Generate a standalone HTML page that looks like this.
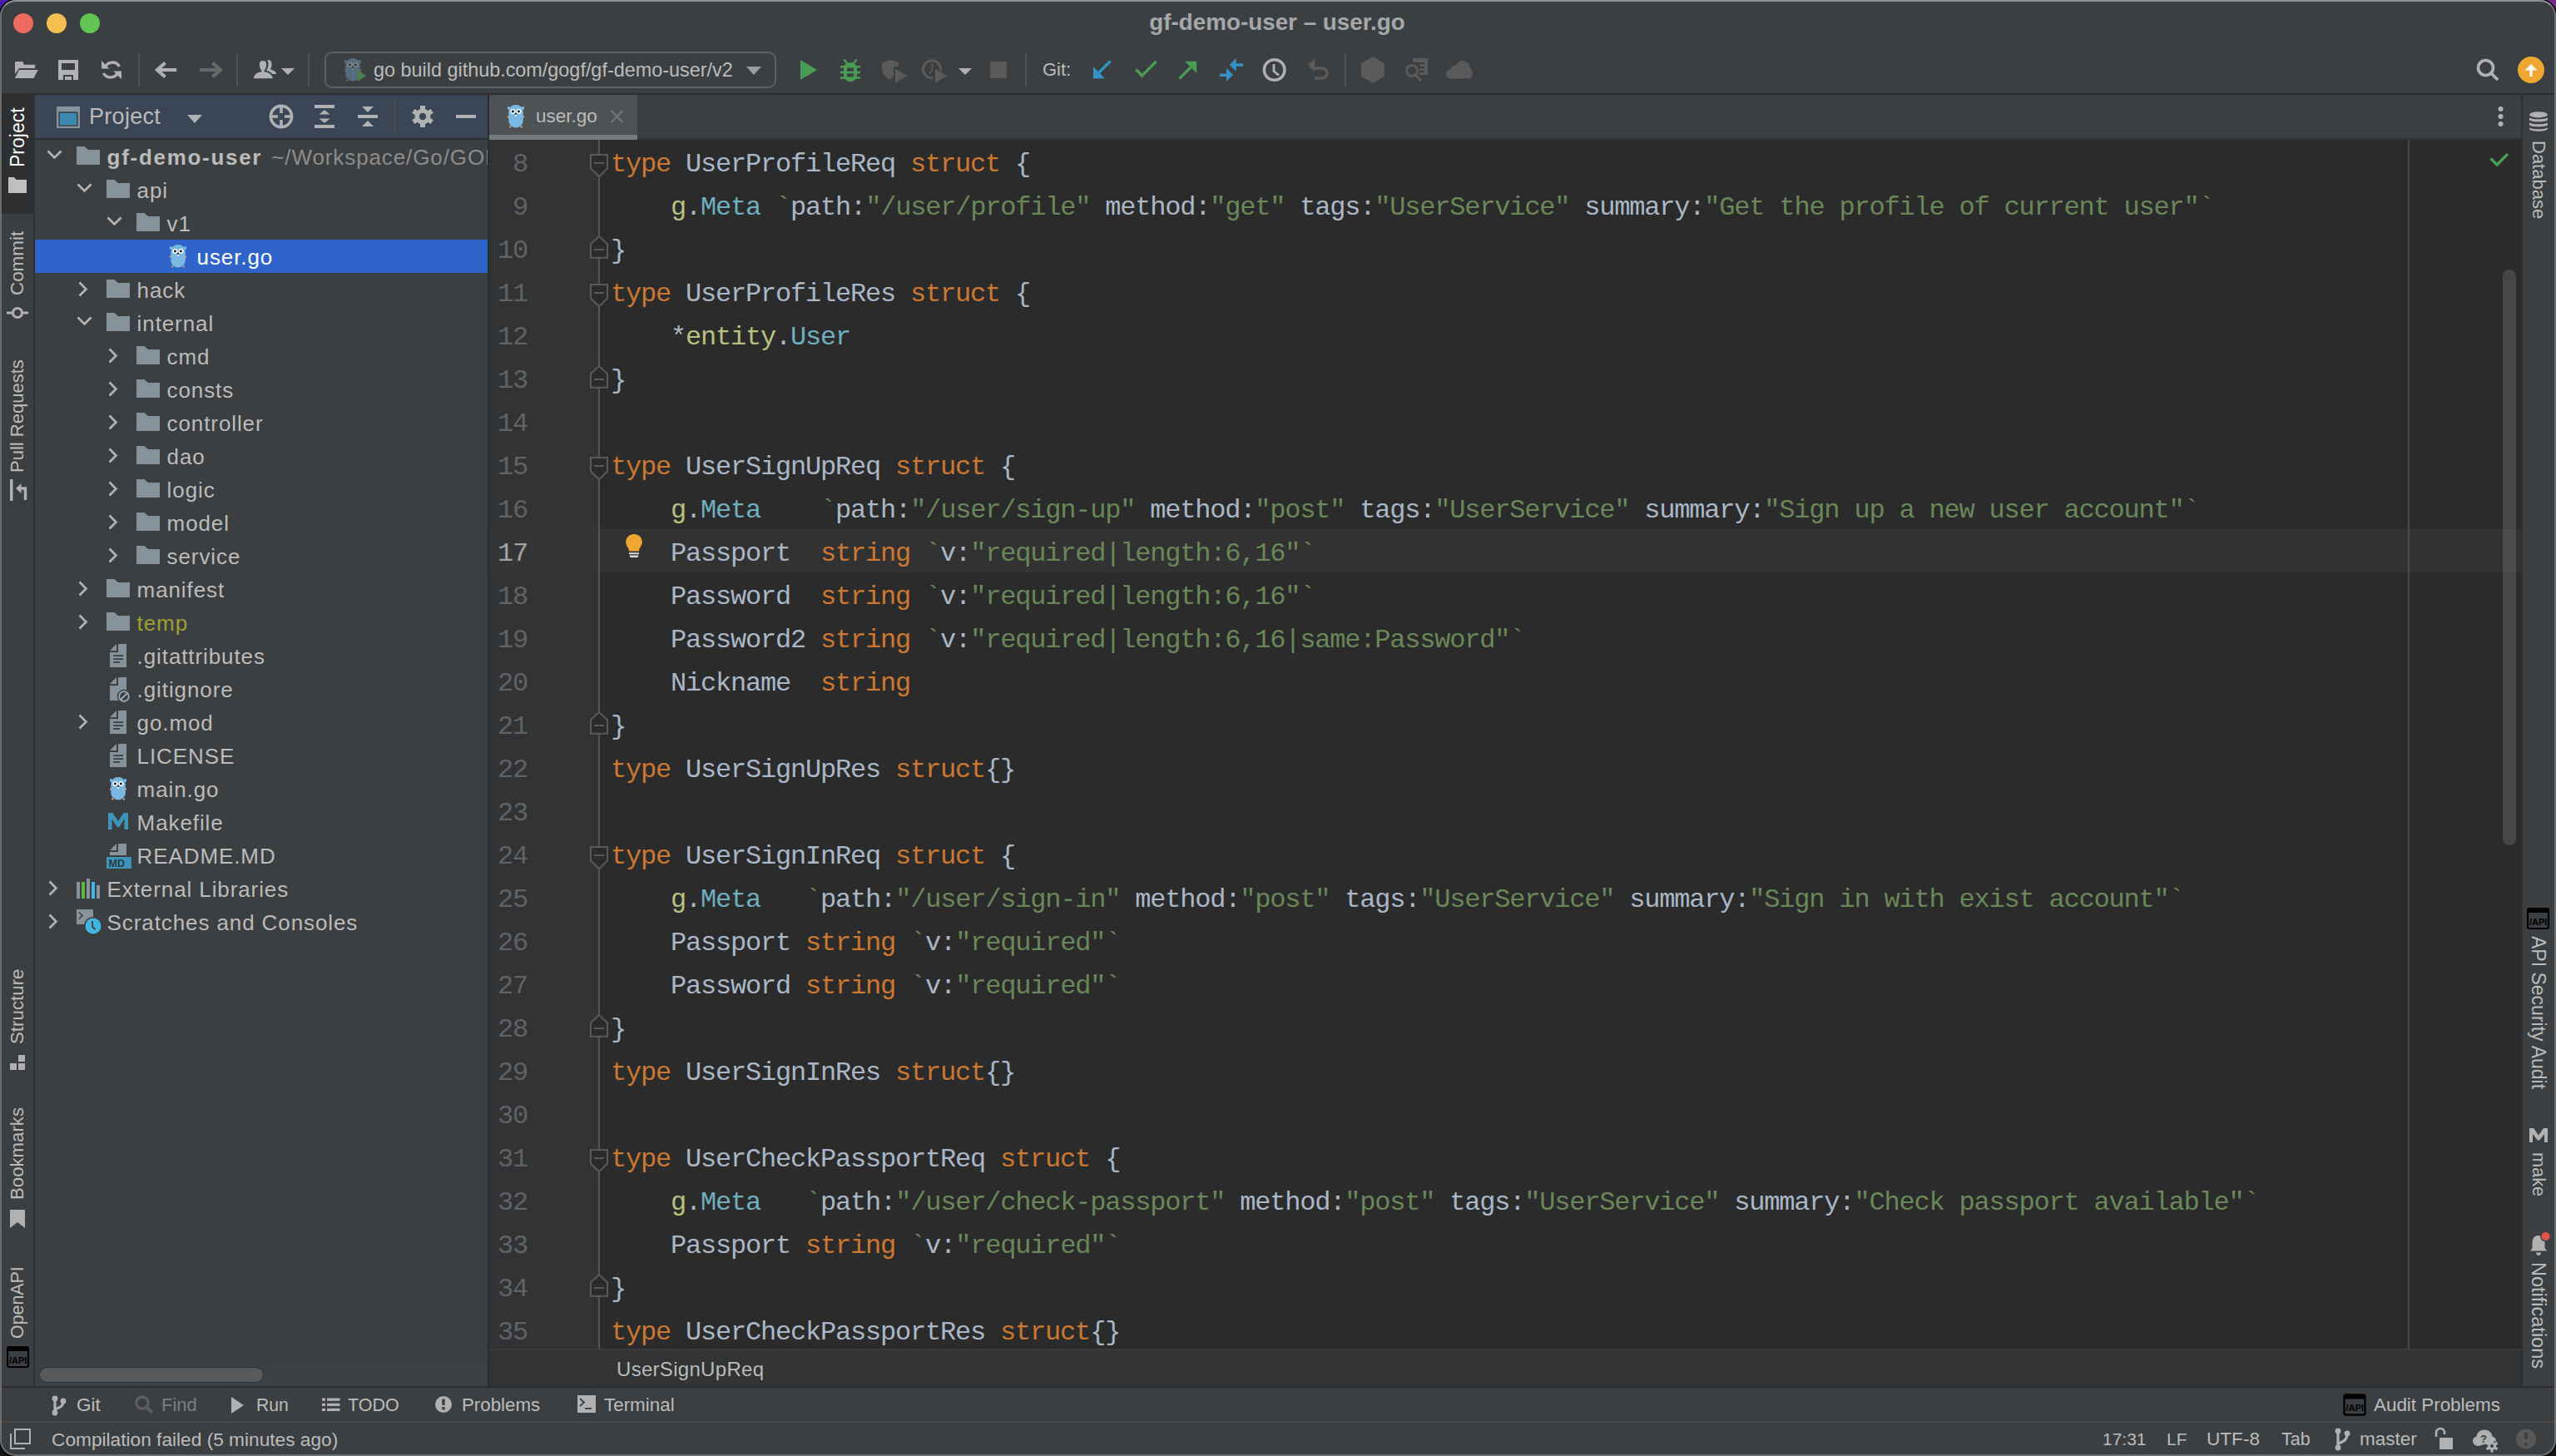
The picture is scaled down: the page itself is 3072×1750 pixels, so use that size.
<!DOCTYPE html>
<html><head><meta charset="utf-8">
<style>
html,body{margin:0;padding:0;width:3072px;height:1750px;overflow:hidden;background:#222;}
*{box-sizing:border-box}
.a{position:absolute}
#bgc{position:absolute;left:0;top:0;width:3072px;height:1750px;background:linear-gradient(90deg,#4a1ca8 0%,#5a2090 50%,#7a2a8a 100%);}
#bgb{position:absolute;left:0;top:875px;width:3072px;height:875px;background:#151515;}
#win{position:absolute;left:0;top:0;width:3072px;height:1750px;border-radius:19px;background:#3c3f41;overflow:hidden;font-family:"Liberation Sans",sans-serif;color:#bbbbbb;}
#wborder{position:absolute;left:0;top:0;width:3072px;height:1750px;border-radius:19px;border:2px solid #6b6d6f;border-top-color:#8e8f91;box-shadow:0 0 0 1.5px #000;pointer-events:none;z-index:50}
.ui{font-family:"Liberation Sans",sans-serif;white-space:pre;}
.code{font-family:"Liberation Mono",monospace;font-size:32px;letter-spacing:-1.2px;white-space:pre;color:#a9b7c6;}
.ln{position:absolute;left:588px;width:46px;padding-top:4px;text-align:right;font-family:"Liberation Mono",monospace;font-size:32px;letter-spacing:-1.2px;color:#606366;}
.cl{position:absolute;left:734px;height:52px;line-height:52px;padding-top:4px;}
.k{color:#cc7832}.s{color:#6a8759}.p{color:#b9c17e}.t{color:#6fb0c0}
.tr{position:absolute;left:42px;width:544px;height:40px;line-height:40px;font-size:26px;letter-spacing:0.9px;color:#bbbbbb;}
.tr span{position:absolute;top:0}
</style></head>
<body>
<svg width="0" height="0" style="position:absolute">
<defs>
<g id="fold"><path d="M0 0H9.5L13.8 4H28V22H0Z" fill="#87939a"/></g>
<g id="gopher">
 <circle cx="1.6" cy="4" r="1.9" fill="#79b8e3"/><circle cx="18.5" cy="4" r="1.9" fill="#79b8e3"/>
 <rect x="1.3" y="0" width="17.5" height="27.6" rx="8.5" fill="#79b8e3"/>
 <circle cx="0.9" cy="14.5" r="1.2" fill="#d39b78"/><circle cx="19.1" cy="14.5" r="1.2" fill="#d39b78"/>
 <circle cx="3.2" cy="26.5" r="1.2" fill="#d39b78"/><circle cx="16.9" cy="26.5" r="1.2" fill="#d39b78"/>
 <circle cx="6.4" cy="8" r="3" fill="#fff"/><circle cx="13.5" cy="8" r="3" fill="#fff"/>
 <circle cx="6.4" cy="8" r="1.4" fill="#000"/><circle cx="13.4" cy="8" r="1.4" fill="#000"/>
 <ellipse cx="10" cy="11" rx="1.4" ry="1.1" fill="#222"/><rect x="9.1" y="11.8" width="1.8" height="2" fill="#fff"/>
</g>
<g id="file"><path d="M10 0H20V28H0V10H10Z M0 8L8 0V8Z" fill="#87939a"/><path d="M4.3 13.2h11.8v1.7H4.3zM4.3 17.2h11.8v1.7H4.3zM4.3 21.1h7.8v1.7H4.3z" fill="#3c3f41"/></g>
<g id="ignore"><path d="M10 0H20V28H0V10H10Z M0 8L8 0V8Z" fill="#87939a"/><circle cx="17" cy="23" r="8.3" fill="#3c3f41"/><circle cx="17" cy="23" r="5.8" fill="none" stroke="#9aabb8" stroke-width="1.8"/><path d="M13 27L21 19" stroke="#9aabb8" stroke-width="1.8"/></g>
<g id="make"><path d="M0 0H5.5L12 10L18.5 0H24V20H19.5V7.5L13.2 17H10.8L4.5 7.5V20H0Z" fill="#3e94b8"/></g>
<g id="md"><path d="M14 0H24V14H4V10H14Z M4 8L12 0V8Z" fill="#87939a"/><rect x="0" y="16" width="30" height="14" fill="#3e94b8"/><text x="2.5" y="28" font-family="Liberation Sans" font-size="12.5" font-weight="bold" fill="#273a45">MD</text></g>
<g id="lib"><rect x="0" y="4" width="4" height="20" fill="#87939a"/><rect x="6" y="4" width="4" height="20" fill="#62b543"/><rect x="12" y="0" width="4" height="24" fill="#87939a"/><rect x="18" y="4" width="4" height="20" fill="#40b6e0"/><rect x="24" y="8" width="4" height="16" fill="#87939a"/></g>
<g id="scratch"><rect x="0" y="0" width="20" height="18" fill="#87939a"/><path d="M3 3.5L7 7.5L3 11.5" fill="none" stroke="#3c3f41" stroke-width="1.6"/><circle cx="20" cy="20" r="11" fill="#3c3f41"/><circle cx="20" cy="20" r="9.5" fill="#40b6e0"/><path d="M19 14V21L22.5 24" fill="none" stroke="#3c3f41" stroke-width="1.8"/></g>
</defs></svg>

<div id="bgc"></div><div id="bgb"></div>
<div id="win">
  <!-- title -->
  <div class="a ui" style="left:0;top:0;width:3070px;height:54px;line-height:54px;text-align:center;font-size:27.8px;font-weight:bold;color:#a5a7a9;">gf-demo-user – user.go</div>
  <div class="a" style="left:16px;top:16px;width:24px;height:24px;border-radius:12px;background:#ec6a5e"></div>
  <div class="a" style="left:56px;top:16px;width:24px;height:24px;border-radius:12px;background:#f4bf4f"></div>
  <div class="a" style="left:96px;top:16px;width:24px;height:24px;border-radius:12px;background:#61c554"></div>

  <!-- toolbar bottom line -->
  <div class="a" style="left:0;top:112px;width:3072px;height:2px;background:#2e2e2e"></div>

  <!-- left stripe -->
  <div class="a" style="left:0;top:114px;width:40px;height:1552px;background:#3c3f41"></div>
  <div class="a" style="left:0;top:114px;width:40px;height:143px;background:#2d2f31"></div>
  <div class="a" style="left:40px;top:114px;width:2px;height:1552px;background:#2f3032"></div>

  <!-- project panel -->
  <div class="a" style="left:42px;top:114px;width:544px;height:52px;background:#3a4555"></div>
  <div class="a" style="left:42px;top:166px;width:544px;height:2px;background:#2e2f31"></div>
  <div class="a" style="left:586px;top:114px;width:2px;height:1552px;background:#2b2b2b"></div>

  <!-- tab bar -->
  <div class="a" style="left:588px;top:114px;width:2442px;height:52px;background:#3c3f41"></div>
  <div class="a" style="left:588px;top:166px;width:2442px;height:2px;background:#323232"></div>
  <div class="a" style="left:588px;top:114px;width:178px;height:48px;background:#4e5254"></div>
  <div class="a" style="left:588px;top:162px;width:178px;height:6px;background:#747a80"></div>

  <!-- editor -->
  <div class="a" style="left:588px;top:168px;width:133px;height:1454px;background:#313335"></div>
  <div class="a" style="left:721px;top:168px;width:2309px;height:1454px;background:#2b2b2b"></div>
  <div class="a" style="left:588px;top:636px;width:133px;height:52px;background:#333537"></div>
  <div class="a" style="left:721px;top:636px;width:2309px;height:52px;background:#323232"></div>
  <div class="a" style="left:719px;top:168px;width:2px;height:1454px;background:#555555"></div>
  <div class="a" style="left:2894px;top:168px;width:2px;height:1454px;background:#4a4a4a"></div>
  <div class="a" style="left:3008px;top:324px;width:16px;height:692px;border-radius:8px;background:rgba(255,255,255,0.13)"></div>

  <!-- breadcrumb -->
  <div class="a" style="left:588px;top:1622px;width:2442px;height:44px;background:#313335"></div>
  <div class="a" style="left:588px;top:1621px;width:2442px;height:2px;background:#3a3b3d"></div>

  <!-- right stripe -->
  <div class="a" style="left:3030px;top:114px;width:2px;height:1552px;background:#2f3032"></div>
  <div class="a" style="left:3032px;top:114px;width:40px;height:1552px;background:#3c3f41"></div>

  <!-- bottom toolbar + status -->
  <div class="a" style="left:0;top:1666px;width:3072px;height:2px;background:#2e2e2e"></div>
  <div class="a" style="left:0;top:1708px;width:3072px;height:2px;background:#4a4a48"></div>

  <!--CODE-->
<svg class="a" style="left:700px;top:168px" width="40" height="1454" viewBox="700 168 40 1454"><path d="M710 186H730V202.5L720 212.3L710 202.5Z" fill="#2b2b2b" stroke="#595959" stroke-width="2"/><rect x="714" y="195" width="12" height="2" fill="#595959"/><path d="M710 342H730V358.5L720 368.3L710 358.5Z" fill="#2b2b2b" stroke="#595959" stroke-width="2"/><rect x="714" y="351" width="12" height="2" fill="#595959"/><path d="M710 550H730V566.5L720 576.3L710 566.5Z" fill="#2b2b2b" stroke="#595959" stroke-width="2"/><rect x="714" y="559" width="12" height="2" fill="#595959"/><path d="M710 1018H730V1034.5L720 1044.3L710 1034.5Z" fill="#2b2b2b" stroke="#595959" stroke-width="2"/><rect x="714" y="1027" width="12" height="2" fill="#595959"/><path d="M710 1382H730V1398.5L720 1408.3L710 1398.5Z" fill="#2b2b2b" stroke="#595959" stroke-width="2"/><rect x="714" y="1391" width="12" height="2" fill="#595959"/><path d="M710 309.7H730V293.2L720 284L710 293.2Z" fill="#2b2b2b" stroke="#595959" stroke-width="2"/><rect x="714" y="299" width="12" height="2" fill="#595959"/><path d="M710 465.7H730V449.2L720 440L710 449.2Z" fill="#2b2b2b" stroke="#595959" stroke-width="2"/><rect x="714" y="455" width="12" height="2" fill="#595959"/><path d="M710 881.7H730V865.2L720 856L710 865.2Z" fill="#2b2b2b" stroke="#595959" stroke-width="2"/><rect x="714" y="871" width="12" height="2" fill="#595959"/><path d="M710 1245.7H730V1229.2L720 1220L710 1229.2Z" fill="#2b2b2b" stroke="#595959" stroke-width="2"/><rect x="714" y="1235" width="12" height="2" fill="#595959"/><path d="M710 1557.7H730V1541.2L720 1532L710 1541.2Z" fill="#2b2b2b" stroke="#595959" stroke-width="2"/><rect x="714" y="1547" width="12" height="2" fill="#595959"/></svg>
<div class="ln" style="top:168px;height:52px;line-height:52px;color:#606366">8</div>
<div class="cl code" style="top:168px"><span class="k">type</span> UserProfileReq <span class="k">struct</span> {</div>
<div class="ln" style="top:220px;height:52px;line-height:52px;color:#606366">9</div>
<div class="cl code" style="top:220px">    <span class="p">g</span>.<span class="t">Meta</span> <span class="s">`</span>path:<span class="s">&quot;/user/profile&quot;</span> method:<span class="s">&quot;get&quot;</span> tags:<span class="s">&quot;UserService&quot;</span> summary:<span class="s">&quot;Get the profile of current user&quot;</span><span class="s">`</span></div>
<div class="ln" style="top:272px;height:52px;line-height:52px;color:#606366">10</div>
<div class="cl code" style="top:272px">}</div>
<div class="ln" style="top:324px;height:52px;line-height:52px;color:#606366">11</div>
<div class="cl code" style="top:324px"><span class="k">type</span> UserProfileRes <span class="k">struct</span> {</div>
<div class="ln" style="top:376px;height:52px;line-height:52px;color:#606366">12</div>
<div class="cl code" style="top:376px">    *<span class="p">entity</span>.<span class="t">User</span></div>
<div class="ln" style="top:428px;height:52px;line-height:52px;color:#606366">13</div>
<div class="cl code" style="top:428px">}</div>
<div class="ln" style="top:480px;height:52px;line-height:52px;color:#606366">14</div>
<div class="cl code" style="top:480px"></div>
<div class="ln" style="top:532px;height:52px;line-height:52px;color:#606366">15</div>
<div class="cl code" style="top:532px"><span class="k">type</span> UserSignUpReq <span class="k">struct</span> {</div>
<div class="ln" style="top:584px;height:52px;line-height:52px;color:#606366">16</div>
<div class="cl code" style="top:584px">    <span class="p">g</span>.<span class="t">Meta</span>    <span class="s">`</span>path:<span class="s">&quot;/user/sign-up&quot;</span> method:<span class="s">&quot;post&quot;</span> tags:<span class="s">&quot;UserService&quot;</span> summary:<span class="s">&quot;Sign up a new user account&quot;</span><span class="s">`</span></div>
<div class="ln" style="top:636px;height:52px;line-height:52px;color:#a4a3a3">17</div>
<div class="cl code" style="top:636px">    Passport  <span class="k">string</span> <span class="s">`</span>v:<span class="s">&quot;required|length:6,16&quot;</span><span class="s">`</span></div>
<div class="ln" style="top:688px;height:52px;line-height:52px;color:#606366">18</div>
<div class="cl code" style="top:688px">    Password  <span class="k">string</span> <span class="s">`</span>v:<span class="s">&quot;required|length:6,16&quot;</span><span class="s">`</span></div>
<div class="ln" style="top:740px;height:52px;line-height:52px;color:#606366">19</div>
<div class="cl code" style="top:740px">    Password2 <span class="k">string</span> <span class="s">`</span>v:<span class="s">&quot;required|length:6,16|same:Password&quot;</span><span class="s">`</span></div>
<div class="ln" style="top:792px;height:52px;line-height:52px;color:#606366">20</div>
<div class="cl code" style="top:792px">    Nickname  <span class="k">string</span></div>
<div class="ln" style="top:844px;height:52px;line-height:52px;color:#606366">21</div>
<div class="cl code" style="top:844px">}</div>
<div class="ln" style="top:896px;height:52px;line-height:52px;color:#606366">22</div>
<div class="cl code" style="top:896px"><span class="k">type</span> UserSignUpRes <span class="k">struct</span>{}</div>
<div class="ln" style="top:948px;height:52px;line-height:52px;color:#606366">23</div>
<div class="cl code" style="top:948px"></div>
<div class="ln" style="top:1000px;height:52px;line-height:52px;color:#606366">24</div>
<div class="cl code" style="top:1000px"><span class="k">type</span> UserSignInReq <span class="k">struct</span> {</div>
<div class="ln" style="top:1052px;height:52px;line-height:52px;color:#606366">25</div>
<div class="cl code" style="top:1052px">    <span class="p">g</span>.<span class="t">Meta</span>   <span class="s">`</span>path:<span class="s">&quot;/user/sign-in&quot;</span> method:<span class="s">&quot;post&quot;</span> tags:<span class="s">&quot;UserService&quot;</span> summary:<span class="s">&quot;Sign in with exist account&quot;</span><span class="s">`</span></div>
<div class="ln" style="top:1104px;height:52px;line-height:52px;color:#606366">26</div>
<div class="cl code" style="top:1104px">    Passport <span class="k">string</span> <span class="s">`</span>v:<span class="s">&quot;required&quot;</span><span class="s">`</span></div>
<div class="ln" style="top:1156px;height:52px;line-height:52px;color:#606366">27</div>
<div class="cl code" style="top:1156px">    Password <span class="k">string</span> <span class="s">`</span>v:<span class="s">&quot;required&quot;</span><span class="s">`</span></div>
<div class="ln" style="top:1208px;height:52px;line-height:52px;color:#606366">28</div>
<div class="cl code" style="top:1208px">}</div>
<div class="ln" style="top:1260px;height:52px;line-height:52px;color:#606366">29</div>
<div class="cl code" style="top:1260px"><span class="k">type</span> UserSignInRes <span class="k">struct</span>{}</div>
<div class="ln" style="top:1312px;height:52px;line-height:52px;color:#606366">30</div>
<div class="cl code" style="top:1312px"></div>
<div class="ln" style="top:1364px;height:52px;line-height:52px;color:#606366">31</div>
<div class="cl code" style="top:1364px"><span class="k">type</span> UserCheckPassportReq <span class="k">struct</span> {</div>
<div class="ln" style="top:1416px;height:52px;line-height:52px;color:#606366">32</div>
<div class="cl code" style="top:1416px">    <span class="p">g</span>.<span class="t">Meta</span>   <span class="s">`</span>path:<span class="s">&quot;/user/check-passport&quot;</span> method:<span class="s">&quot;post&quot;</span> tags:<span class="s">&quot;UserService&quot;</span> summary:<span class="s">&quot;Check passport available&quot;</span><span class="s">`</span></div>
<div class="ln" style="top:1468px;height:52px;line-height:52px;color:#606366">33</div>
<div class="cl code" style="top:1468px">    Passport <span class="k">string</span> <span class="s">`</span>v:<span class="s">&quot;required&quot;</span><span class="s">`</span></div>
<div class="ln" style="top:1520px;height:52px;line-height:52px;color:#606366">34</div>
<div class="cl code" style="top:1520px">}</div>
<div class="ln" style="top:1572px;height:52px;line-height:52px;color:#606366">35</div>
<div class="cl code" style="top:1572px"><span class="k">type</span> UserCheckPassportRes <span class="k">struct</span>{}</div>
<!--/CODE-->
<!--TREE-->
<div class="a" style="left:0;top:0;width:586px;height:1640px;overflow:hidden">
<svg class="a" style="left:56px;top:180px" width="19" height="13" viewBox="0 0 19 13"><path d="M1.5 1.5 L9.5 9.5 L17.5 1.5" fill="none" stroke="#b4b4b4" stroke-width="2.6"/></svg>
<svg class="a" style="left:92px;top:176px" width="28" height="22"><use href="#fold"/></svg>
<div class="tr ui" style="left:128.6px;top:169px;width:auto"><b style="letter-spacing:1.7px">gf-demo-user</b><span style="position:static;color:#8c8c8c;margin-left:3px"> ~/Workspace/Go/GOPATH/src/github.com/gogf/gf-demo-user</span></div>
<svg class="a" style="left:92px;top:220px" width="19" height="13" viewBox="0 0 19 13"><path d="M1.5 1.5 L9.5 9.5 L17.5 1.5" fill="none" stroke="#b4b4b4" stroke-width="2.6"/></svg>
<svg class="a" style="left:128px;top:216px" width="28" height="22"><use href="#fold"/></svg>
<div class="tr ui" style="left:164.6px;top:209px;width:auto;color:#bbbbbb">api</div>
<svg class="a" style="left:128px;top:260px" width="19" height="13" viewBox="0 0 19 13"><path d="M1.5 1.5 L9.5 9.5 L17.5 1.5" fill="none" stroke="#b4b4b4" stroke-width="2.6"/></svg>
<svg class="a" style="left:164px;top:256px" width="28" height="22"><use href="#fold"/></svg>
<div class="tr ui" style="left:200.6px;top:249px;width:auto;color:#bbbbbb">v1</div>
<div class="a" style="left:42px;top:288px;width:544px;height:40px;background:#2f65ca"></div>
<svg class="a" style="left:204px;top:294px" width="20" height="28"><use href="#gopher"/></svg>
<div class="tr ui" style="left:236.6px;top:289px;width:auto;color:#ffffff">user.go</div>
<svg class="a" style="left:94px;top:338px" width="13" height="19" viewBox="0 0 13 19"><path d="M1.5 1.5 L9.5 9.5 L1.5 17.5" fill="none" stroke="#b4b4b4" stroke-width="2.6"/></svg>
<svg class="a" style="left:128px;top:336px" width="28" height="22"><use href="#fold"/></svg>
<div class="tr ui" style="left:164.6px;top:329px;width:auto;color:#bbbbbb">hack</div>
<svg class="a" style="left:92px;top:380px" width="19" height="13" viewBox="0 0 19 13"><path d="M1.5 1.5 L9.5 9.5 L17.5 1.5" fill="none" stroke="#b4b4b4" stroke-width="2.6"/></svg>
<svg class="a" style="left:128px;top:376px" width="28" height="22"><use href="#fold"/></svg>
<div class="tr ui" style="left:164.6px;top:369px;width:auto;color:#bbbbbb">internal</div>
<svg class="a" style="left:130px;top:418px" width="13" height="19" viewBox="0 0 13 19"><path d="M1.5 1.5 L9.5 9.5 L1.5 17.5" fill="none" stroke="#b4b4b4" stroke-width="2.6"/></svg>
<svg class="a" style="left:164px;top:416px" width="28" height="22"><use href="#fold"/></svg>
<div class="tr ui" style="left:200.6px;top:409px;width:auto;color:#bbbbbb">cmd</div>
<svg class="a" style="left:130px;top:458px" width="13" height="19" viewBox="0 0 13 19"><path d="M1.5 1.5 L9.5 9.5 L1.5 17.5" fill="none" stroke="#b4b4b4" stroke-width="2.6"/></svg>
<svg class="a" style="left:164px;top:456px" width="28" height="22"><use href="#fold"/></svg>
<div class="tr ui" style="left:200.6px;top:449px;width:auto;color:#bbbbbb">consts</div>
<svg class="a" style="left:130px;top:498px" width="13" height="19" viewBox="0 0 13 19"><path d="M1.5 1.5 L9.5 9.5 L1.5 17.5" fill="none" stroke="#b4b4b4" stroke-width="2.6"/></svg>
<svg class="a" style="left:164px;top:496px" width="28" height="22"><use href="#fold"/></svg>
<div class="tr ui" style="left:200.6px;top:489px;width:auto;color:#bbbbbb">controller</div>
<svg class="a" style="left:130px;top:538px" width="13" height="19" viewBox="0 0 13 19"><path d="M1.5 1.5 L9.5 9.5 L1.5 17.5" fill="none" stroke="#b4b4b4" stroke-width="2.6"/></svg>
<svg class="a" style="left:164px;top:536px" width="28" height="22"><use href="#fold"/></svg>
<div class="tr ui" style="left:200.6px;top:529px;width:auto;color:#bbbbbb">dao</div>
<svg class="a" style="left:130px;top:578px" width="13" height="19" viewBox="0 0 13 19"><path d="M1.5 1.5 L9.5 9.5 L1.5 17.5" fill="none" stroke="#b4b4b4" stroke-width="2.6"/></svg>
<svg class="a" style="left:164px;top:576px" width="28" height="22"><use href="#fold"/></svg>
<div class="tr ui" style="left:200.6px;top:569px;width:auto;color:#bbbbbb">logic</div>
<svg class="a" style="left:130px;top:618px" width="13" height="19" viewBox="0 0 13 19"><path d="M1.5 1.5 L9.5 9.5 L1.5 17.5" fill="none" stroke="#b4b4b4" stroke-width="2.6"/></svg>
<svg class="a" style="left:164px;top:616px" width="28" height="22"><use href="#fold"/></svg>
<div class="tr ui" style="left:200.6px;top:609px;width:auto;color:#bbbbbb">model</div>
<svg class="a" style="left:130px;top:658px" width="13" height="19" viewBox="0 0 13 19"><path d="M1.5 1.5 L9.5 9.5 L1.5 17.5" fill="none" stroke="#b4b4b4" stroke-width="2.6"/></svg>
<svg class="a" style="left:164px;top:656px" width="28" height="22"><use href="#fold"/></svg>
<div class="tr ui" style="left:200.6px;top:649px;width:auto;color:#bbbbbb">service</div>
<svg class="a" style="left:94px;top:698px" width="13" height="19" viewBox="0 0 13 19"><path d="M1.5 1.5 L9.5 9.5 L1.5 17.5" fill="none" stroke="#b4b4b4" stroke-width="2.6"/></svg>
<svg class="a" style="left:128px;top:696px" width="28" height="22"><use href="#fold"/></svg>
<div class="tr ui" style="left:164.6px;top:689px;width:auto;color:#bbbbbb">manifest</div>
<svg class="a" style="left:94px;top:738px" width="13" height="19" viewBox="0 0 13 19"><path d="M1.5 1.5 L9.5 9.5 L1.5 17.5" fill="none" stroke="#b4b4b4" stroke-width="2.6"/></svg>
<svg class="a" style="left:128px;top:736px" width="28" height="22"><use href="#fold"/></svg>
<div class="tr ui" style="left:164.6px;top:729px;width:auto;color:#9f9e33">temp</div>
<svg class="a" style="left:132px;top:774px" width="20" height="28"><use href="#file"/></svg>
<div class="tr ui" style="left:164.6px;top:769px;width:auto;color:#bbbbbb">.gitattributes</div>
<svg class="a" style="left:132px;top:814px" width="26" height="30"><use href="#ignore"/></svg>
<div class="tr ui" style="left:164.6px;top:809px;width:auto;color:#bbbbbb">.gitignore</div>
<svg class="a" style="left:94px;top:858px" width="13" height="19" viewBox="0 0 13 19"><path d="M1.5 1.5 L9.5 9.5 L1.5 17.5" fill="none" stroke="#b4b4b4" stroke-width="2.6"/></svg>
<svg class="a" style="left:132px;top:854px" width="20" height="28"><use href="#file"/></svg>
<div class="tr ui" style="left:164.6px;top:849px;width:auto;color:#bbbbbb">go.mod</div>
<svg class="a" style="left:132px;top:894px" width="20" height="28"><use href="#file"/></svg>
<div class="tr ui" style="left:164.6px;top:889px;width:auto;color:#bbbbbb">LICENSE</div>
<svg class="a" style="left:132px;top:934px" width="20" height="28"><use href="#gopher"/></svg>
<div class="tr ui" style="left:164.6px;top:929px;width:auto;color:#bbbbbb">main.go</div>
<svg class="a" style="left:130px;top:977px" width="26" height="22"><use href="#make"/></svg>
<div class="tr ui" style="left:164.6px;top:969px;width:auto;color:#bbbbbb">Makefile</div>
<svg class="a" style="left:128px;top:1014px" width="30" height="30"><use href="#md"/></svg>
<div class="tr ui" style="left:164.6px;top:1009px;width:auto;color:#bbbbbb">README.MD</div>
<svg class="a" style="left:58px;top:1058px" width="13" height="19" viewBox="0 0 13 19"><path d="M1.5 1.5 L9.5 9.5 L1.5 17.5" fill="none" stroke="#b4b4b4" stroke-width="2.6"/></svg>
<svg class="a" style="left:92px;top:1056px" width="28" height="24"><use href="#lib"/></svg>
<div class="tr ui" style="left:128.6px;top:1049px;width:auto;color:#bbbbbb">External Libraries</div>
<svg class="a" style="left:58px;top:1098px" width="13" height="19" viewBox="0 0 13 19"><path d="M1.5 1.5 L9.5 9.5 L1.5 17.5" fill="none" stroke="#b4b4b4" stroke-width="2.6"/></svg>
<svg class="a" style="left:92px;top:1093px" width="30" height="30"><use href="#scratch"/></svg>
<div class="tr ui" style="left:128.6px;top:1089px;width:auto;color:#bbbbbb">Scratches and Consoles</div>
</div>
<!--/TREE-->
<!--TOOLBAR-->
<svg class="a" style="left:0;top:60px" width="1800" height="48" viewBox="0 60 1800 48">
 <g fill="#afb1b3">
  <!-- open folder -->
  <path d="M18 74H27.3L29 77.8H42.2V81.9H23L18 89.2Z"/>
  <path d="M22.9 84H45.9L40.5 93.9H17.9Z"/>
  <!-- save -->
  <path d="M70 72H94V96H70Z M74 76V84H90V76Z M76 90V96H78V92H86V96H88V90Z" fill-rule="evenodd"/>
  <!-- sync -->
  <path d="M126 82A9.5 9.5 0 0 1 143.5 80" fill="none" stroke="#afb1b3" stroke-width="3.4"/>
  <path d="M122 73V82.4H131.5Z"/>
  <path d="M142 86A9.5 9.5 0 0 1 124.5 88" fill="none" stroke="#afb1b3" stroke-width="3.4"/>
  <path d="M146 85.6V95.3L136.4 85.6Z"/>
  <!-- back -->
  <path d="M189 84H212.2" stroke="#afb1b3" stroke-width="4.2" fill="none"/>
  <path d="M198.5 75.5L189 84L198.5 92.5" stroke="#afb1b3" stroke-width="4.2" fill="none"/>
  <!-- users -->
  <path d="M321 72C324.5 71.5 326.5 73.5 326.5 77C326.5 80 325.5 82.5 325 83.5C329 84.5 332 86 332 89H327.5C326 87.5 323 86.3 319.5 85.5C321.3 82.5 322.5 80 322.5 77C322.5 74.5 322 73 321 72Z"/>
  <path d="M316 72.1C312.8 72.1 311 74.5 311 77.5C311 81 312.5 84 313.5 85.4C308 86.5 304 89 303.8 95H328.6C328.4 89 324.5 86.5 318.5 85.4C319.5 84 321 81 321 77.5C321 74.5 319.2 72.1 316 72.1Z" stroke="#3c3f41" stroke-width="1.6"/>
  <path d="M338 82H354L346 90Z"/>
 </g>
 <path d="M240 84H264" stroke="#666869" stroke-width="4.2" fill="none"/>
 <path d="M255.5 75.5L265 84L255.5 92.5" stroke="#666869" stroke-width="4.2" fill="none"/>
 <rect x="166" y="64" width="2" height="40" fill="#515355"/>
 <rect x="284" y="64" width="2" height="40" fill="#515355"/>
 <rect x="370" y="64" width="2" height="40" fill="#515355"/>
 <rect x="1232" y="64" width="2" height="40" fill="#515355"/>
 <rect x="1616" y="64" width="2" height="40" fill="#515355"/>
 <!-- combo -->
 <rect x="391" y="63" width="541" height="42" rx="8" fill="none" stroke="#5e6163" stroke-width="2"/>
 <g transform="translate(414,70)" opacity="0.38"><use href="#gopher"/></g>
 <path d="M430 84L440 91L430 98Z" fill="#4a7f50"/>
 <path d="M897 80H915L906 90Z" fill="#9a9da0"/>
 <!-- run -->
 <path d="M962 72L982 84L962 96Z" fill="#499c54"/>
 <!-- debug bug -->
 <g fill="#499c54">
  <path d="M1014.5 71.5L1018 76M1029.5 71.5L1026 76" stroke="#499c54" stroke-width="2.6"/>
  <path d="M1022 75c-5 0-8 3.2-8 7.5V90c0 4.6 3.4 8 8 8s8-3.4 8-8V82.5c0-4.3-3-7.5-8-7.5Z"/>
  <rect x="1010" y="79" width="24" height="2.6"/>
  <rect x="1010" y="85.7" width="24" height="2.6"/>
  <rect x="1010" y="92.3" width="24" height="2.6"/>
 </g>
 <rect x="1018" y="81.6" width="8" height="4.1" fill="#3c3f41"/>
 <rect x="1018" y="88.3" width="8" height="4" fill="#3c3f41"/>
 <!-- coverage -->
 <path d="M1060 75.5L1070 72L1080 75V80H1074V91L1070 95.8C1063 93 1060 88 1060 81Z" fill="#5a5a5a"/>
 <path d="M1076 82.5L1090 91L1076 100Z" fill="#5a5a5a"/>
 <!-- profiler -->
 <circle cx="1120" cy="83.3" r="10.5" fill="none" stroke="#5a5a5a" stroke-width="3"/>
 <path d="M1120.5 76.5V84L1117 88.5" fill="none" stroke="#5a5a5a" stroke-width="2"/>
 <path d="M1121 80L1141 91L1121 103Z" fill="#3c3f41"/>
 <path d="M1124 82.5L1138 91L1124 100Z" fill="#5a5a5a"/>
 <path d="M1152 82H1168L1160 90Z" fill="#afb1b3"/>
 <!-- stop -->
 <rect x="1190" y="74" width="20" height="20" fill="#595959"/>
 <!-- git arrows -->
 <path d="M1334.5 73.5L1320 88" stroke="#3592c4" stroke-width="3.2" fill="none"/>
 <path d="M1314 80.3V94.2H1328Z" fill="#3592c4"/>
 <path d="M1365.5 83.5L1372.5 91L1389.5 74" stroke="#499c54" stroke-width="3.4" fill="none"/>
 <path d="M1417.5 94.5L1432 80" stroke="#499c54" stroke-width="3.2" fill="none"/>
 <path d="M1424 73.7H1438.2V87.8Z" fill="#499c54"/>
 <path d="M1494 78H1484.5M1466 90.2H1475" stroke="#3592c4" stroke-width="3.5" fill="none"/>
 <path d="M1485.7 69.7V86L1477.8 77.8Z" fill="#3592c4"/>
 <path d="M1474 81.9V98.1L1482 90Z" fill="#3592c4"/>
 <!-- history clock -->
 <circle cx="1531.7" cy="84" r="12.3" fill="none" stroke="#afb1b3" stroke-width="3.4"/>
 <path d="M1531 77V85.5L1537 90.5" fill="none" stroke="#afb1b3" stroke-width="2.8"/>
 <!-- rollback -->
 <path d="M1580 82H1589A6 6 0 0 1 1589 94H1580" fill="none" stroke="#5b5b5b" stroke-width="3.4"/>
 <path d="M1572 78L1580 70V86Z" fill="#5b5b5b"/>
 <!-- hexagon -->
 <path d="M1650 68L1663.7 76V92L1650 100L1636 92V76Z" fill="#5a5a5a"/>
 <!-- search doc -->
 <path d="M1698 70H1716V90H1706V87H1712V85H1706V82H1712V80H1706V77H1712V75H1698Z" fill="#5a5a5a"/>
 <circle cx="1697" cy="85" r="6.5" fill="none" stroke="#5a5a5a" stroke-width="3"/>
 <path d="M1701.5 90L1708 97" stroke="#5a5a5a" stroke-width="3.2"/>
 <!-- cloud -->
 <path d="M1744 94.6C1740 94.6 1738 92 1738 89C1738 86 1740 83.5 1743.5 83.5C1744 80 1747 78 1750 78.5C1751.5 75 1754.5 73 1758 73C1763 73 1766.5 77 1766.5 82C1768.5 83 1770 85 1770 88C1770 92 1767.5 94.6 1764 94.6Z" fill="#5a5a5a"/>
</svg>
<div class="a ui" style="left:449px;top:68px;height:32px;line-height:32px;font-size:23.4px;color:#bbbbbb">go build github.com/gogf/gf-demo-user/v2</div>
<div class="a ui" style="left:1253px;top:68px;height:32px;line-height:32px;font-size:22px;color:#bbbbbb">Git:</div>
<!-- search + update -->
<svg class="a" style="left:2960px;top:60px" width="100" height="48" viewBox="2960 60 100 48">
 <circle cx="2987.5" cy="81.5" r="9" fill="none" stroke="#afb1b3" stroke-width="3.6"/>
 <path d="M2994 88L3002 96" stroke="#afb1b3" stroke-width="3.8"/>
 <circle cx="3042" cy="84" r="16" fill="#f0a732"/>
 <path d="M3034.5 84.5L3042 77L3049.5 84.5Z" fill="#fff"/>
 <rect x="3040.5" y="83" width="3" height="9" fill="#fff"/>
</svg>
<!--/TOOLBAR-->

<!--PANELS-->
<!-- project header -->
<svg class="a" style="left:60px;top:114px" width="530" height="52" viewBox="60 114 530 52">
 <path d="M68 128H96V154H68Z M70.3 134.2V151.7H93.7V134.2Z" fill="#87939a" fill-rule="evenodd"/>
 <rect x="72" y="136" width="20" height="14.2" fill="#3c8bae"/>
 <path d="M225 138H243L234 148Z" fill="#afb1b3"/>
 <circle cx="338" cy="140" r="12.6" fill="none" stroke="#afb1b3" stroke-width="3.6"/>
 <path d="M338 126V136M338 144V154M324 140H334M342 140H352" stroke="#afb1b3" stroke-width="3.6"/>
 <g fill="#afb1b3">
  <rect x="378" y="126" width="24" height="4"/><rect x="378" y="150" width="24" height="4"/>
  <path d="M383.5 137.5L390 132L396.5 137.5Z"/><path d="M383.5 142.5L390 148L396.5 142.5Z"/>
  <rect x="430" y="138" width="24" height="4"/>
  <path d="M435 128H449L442 135Z"/><path d="M435 152H449L442 145Z"/>
  <rect x="548" y="138" width="24" height="4"/>
 </g>
 <rect x="474" y="120" width="2" height="40" fill="#4e4a46"/>
 <g transform="translate(508,140)">
  <circle r="9.5" fill="#afb1b3"/>
  <g fill="#afb1b3"><rect x="-3" y="-13" width="6" height="26"/><rect x="-3" y="-13" width="6" height="26" transform="rotate(60)"/><rect x="-3" y="-13" width="6" height="26" transform="rotate(120)"/></g>
  <circle r="4.2" fill="#3a4555"/>
 </g>
</svg>
<div class="a ui" style="left:107px;top:120px;height:40px;line-height:40px;font-size:27px;color:#bbbbbb;letter-spacing:0.3px">Project</div>

<!-- editor tab -->
<svg class="a" style="left:610px;top:126px" width="20" height="28"><use href="#gopher"/></svg>
<div class="a ui" style="left:644px;top:124px;height:32px;line-height:32px;font-size:22.5px;color:#bbbbbb">user.go</div>
<svg class="a" style="left:730px;top:128px" width="24" height="24" viewBox="730 128 24 24"><path d="M734.5 133L748.5 147M748.5 133L734.5 147" stroke="#73767a" stroke-width="2"/></svg>
<!-- more dots -->
<svg class="a" style="left:2990px;top:126px" width="20" height="30" viewBox="2990 126 20 30"><circle cx="3005.5" cy="131" r="3" fill="#afb1b3"/><circle cx="3005.5" cy="140" r="3" fill="#afb1b3"/><circle cx="3005.5" cy="149" r="3" fill="#afb1b3"/></svg>
<!-- check -->
<svg class="a" style="left:2990px;top:180px" width="30" height="26" viewBox="2990 180 30 26"><path d="M2993.5 190.5L3001 198L3014 185" fill="none" stroke="#499c54" stroke-width="3.4"/></svg>
<!-- lightbulb -->
<svg class="a" style="left:750px;top:640px" width="26" height="34" viewBox="750 640 26 34">
 <path d="M762 642C756.5 642 752.2 646 752.2 651.5C752.2 655.5 754.5 657.5 755.8 660.2V662.5H768.2V660.2C769.5 657.5 771.8 655.5 771.8 651.5C771.8 646 767.5 642 762 642Z" fill="#f0a732"/>
 <rect x="756" y="664.2" width="12" height="2" fill="#d8d8d8"/>
 <path d="M756.5 667.5H767.5L766.5 670H757.5Z" fill="#d8d8d8"/>
</svg>

<!-- left stripe labels -->
<div class="a ui" style="left:8px;top:201px;width:71px;height:26px;line-height:26px;font-size:23px;color:#ffffff;transform-origin:0 0;transform:rotate(-90deg)">Project</div>
<svg class="a" style="left:10px;top:213px" width="22" height="20"><path d="M0 0H7L9.5 3H22V19H0Z" fill="#bfbfbf"/></svg>
<div class="a ui" style="left:8px;top:355px;width:77px;height:26px;line-height:26px;font-size:22.4px;color:#bbbbbb;transform-origin:0 0;transform:rotate(-90deg)">Commit</div>
<svg class="a" style="left:6px;top:366px" width="30" height="20" viewBox="0 0 30 20"><circle cx="15" cy="10" r="5.5" fill="none" stroke="#afb1b3" stroke-width="3.2"/><path d="M2 10H9.5M20.5 10H28" stroke="#afb1b3" stroke-width="3.2"/></svg>
<div class="a ui" style="left:8px;top:568px;width:135px;height:26px;line-height:26px;font-size:22px;color:#bbbbbb;transform-origin:0 0;transform:rotate(-90deg)">Pull Requests</div>
<svg class="a" style="left:10px;top:576px" width="24" height="26" viewBox="0 0 24 26"><rect x="2" y="0" width="3.5" height="26" fill="#afb1b3"/><path d="M9 11L15.5 5V17Z" fill="#afb1b3"/><path d="M14 11H20.5V25" fill="none" stroke="#afb1b3" stroke-width="3.4"/></svg>
<div class="a ui" style="left:8px;top:1255px;width:94px;height:26px;line-height:26px;font-size:22.3px;color:#bbbbbb;transform-origin:0 0;transform:rotate(-90deg)">Structure</div>
<svg class="a" style="left:12px;top:1268px" width="20" height="20" viewBox="0 0 20 20"><rect x="10" y="0" width="8" height="8" fill="#afb1b3"/><rect x="0" y="10" width="8" height="8" fill="#afb1b3"/><rect x="10" y="10" width="8" height="8" fill="#afb1b3"/></svg>
<div class="a ui" style="left:8px;top:1442px;width:111px;height:26px;line-height:26px;font-size:22.2px;color:#bbbbbb;transform-origin:0 0;transform:rotate(-90deg)">Bookmarks</div>
<svg class="a" style="left:12px;top:1454px" width="18" height="22" viewBox="0 0 18 22"><path d="M0 0H18V22L9 15L0 22Z" fill="#afb1b3"/></svg>
<div class="a ui" style="left:8px;top:1609px;width:87px;height:26px;line-height:26px;font-size:21.4px;color:#bbbbbb;transform-origin:0 0;transform:rotate(-90deg)">OpenAPI</div>
<svg class="a" style="left:8px;top:1618px" width="28" height="26" viewBox="0 0 28 26"><rect x="1" y="1" width="25" height="24" rx="2" fill="#3c3f41" stroke="#000" stroke-width="2.2"/><rect x="1" y="1" width="25" height="5" fill="#000"/><text x="3" y="21" font-family="Liberation Sans" font-size="11" font-weight="bold" fill="#000">/API</text></svg>

<!-- right stripe labels -->
<svg class="a" style="left:3039px;top:134px" width="24" height="25" viewBox="0 0 24 25"><ellipse cx="12" cy="3.8" rx="11" ry="3.6" fill="#afb1b3"/><path d="M1 7.2C4 10 20 10 23 7.2V10.2C20 13 4 13 1 10.2Z M1 13.2C4 16 20 16 23 13.2V16.2C20 19 4 19 1 16.2Z M1 19.2C4 22 20 22 23 19.2V21.2C20 24.5 4 24.5 1 21.2Z" fill="#afb1b3"/></svg>
<div class="a ui" style="left:3064px;top:169px;width:94px;height:26px;line-height:26px;font-size:22px;color:#bbbbbb;transform-origin:0 0;transform:rotate(90deg)">Database</div>
<svg class="a" style="left:3037px;top:1091px" width="28" height="27" viewBox="0 0 28 27"><rect x="1" y="1" width="25" height="24" rx="2" fill="#3c3f41" stroke="#000" stroke-width="2.2"/><rect x="1" y="1" width="25" height="5" fill="#000"/><text x="3" y="21" font-family="Liberation Sans" font-size="11" font-weight="bold" fill="#000">/API</text></svg>
<div class="a ui" style="left:3064px;top:1125px;width:184px;height:26px;line-height:26px;font-size:23px;color:#bbbbbb;transform-origin:0 0;transform:rotate(90deg)">API Security Audit</div>
<svg class="a" style="left:3040px;top:1356px" width="22" height="17" viewBox="0 0 22 17"><path d="M0 0H5L11 8.5L17 0H22V17H18V7L12.2 14.5H9.8L4 7V17H0Z" fill="#afb1b3"/></svg>
<div class="a ui" style="left:3064px;top:1385px;width:53px;height:26px;line-height:26px;font-size:21.7px;color:#bbbbbb;transform-origin:0 0;transform:rotate(90deg)">make</div>
<svg class="a" style="left:3038px;top:1478px" width="30" height="32" viewBox="0 0 30 32"><path d="M13 7C8 7 5.5 11 5.5 15.5V22L3 25.5H23L20.5 22V15.5C20.5 11 18 7 13 7Z" fill="#afb1b3"/><path d="M10 27.5H16C16 29.5 14.5 31 13 31S10 29.5 10 27.5Z" fill="#afb1b3"/><circle cx="21.5" cy="8" r="6.5" fill="#3c3f41"/><circle cx="21.5" cy="8" r="5" fill="#e0534a"/></svg>
<div class="a ui" style="left:3064px;top:1517px;width:128px;height:26px;line-height:26px;font-size:23.5px;color:#bbbbbb;transform-origin:0 0;transform:rotate(90deg)">Notifications</div>

<!-- breadcrumb -->
<div class="a ui" style="left:741px;top:1630px;height:32px;line-height:32px;font-size:24px;letter-spacing:0.3px;color:#bbbbbb">UserSignUpReq</div>

<!-- tree horizontal scrollbar -->
<div class="a" style="left:42px;top:1638px;width:544px;height:28px;background:#3e4143"></div>
<div class="a" style="left:47px;top:1643px;width:270px;height:19px;border-radius:10px;background:#58595b;border:1.5px solid #2f3032"></div>

<!-- bottom tool bar -->
<svg class="a" style="left:0;top:1668px" width="900" height="40" viewBox="0 1668 900 40">
 <g fill="#afb1b3">
  <circle cx="66" cy="1681" r="3.4"/><circle cx="76" cy="1684" r="3.4"/><circle cx="66" cy="1698" r="3.4"/>
 </g>
 <path d="M66 1681V1698M76 1684C76 1691 71 1692 66 1694" fill="none" stroke="#afb1b3" stroke-width="3.2"/>
 <circle cx="171" cy="1686" r="7.2" fill="none" stroke="#5e6062" stroke-width="3.2"/>
 <path d="M176 1691L183 1698" stroke="#5e6062" stroke-width="3.4"/>
 <path d="M278 1679L293 1689L278 1699Z" fill="#afb1b3"/>
 <g fill="#afb1b3">
  <rect x="387" y="1680.5" width="4" height="3.2"/><rect x="393" y="1680.5" width="15.5" height="3.2"/>
  <rect x="387" y="1686.7" width="4" height="3.2"/><rect x="393" y="1686.7" width="15.5" height="3.2"/>
  <rect x="387" y="1692.8" width="4" height="3.2"/><rect x="393" y="1692.8" width="15.5" height="3.2"/>
 </g>
 <circle cx="533" cy="1688" r="10" fill="#afb1b3"/>
 <rect x="531.3" y="1681.5" width="3.4" height="7.5" fill="#3c3f41"/><rect x="531.3" y="1691" width="3.4" height="3.4" fill="#3c3f41"/>
 <rect x="694" y="1677" width="22" height="21" fill="#afb1b3"/>
 <path d="M697 1681L702 1685.5L697 1690" fill="none" stroke="#3c3f41" stroke-width="1.8"/>
 <rect x="703" y="1692" width="8" height="1.8" fill="#3c3f41"/>
</svg>
<div class="a ui" style="left:92px;top:1673px;height:32px;line-height:32px;font-size:22.5px;color:#bbbbbb">Git</div>
<div class="a ui" style="left:194px;top:1673px;height:32px;line-height:32px;font-size:22px;color:#7c7e80">Find</div>
<div class="a ui" style="left:308px;top:1673px;height:32px;line-height:32px;font-size:21.2px;color:#bbbbbb">Run</div>
<div class="a ui" style="left:418px;top:1673px;height:32px;line-height:32px;font-size:21.5px;color:#bbbbbb">TODO</div>
<div class="a ui" style="left:555px;top:1673px;height:32px;line-height:32px;font-size:22.3px;color:#bbbbbb">Problems</div>
<div class="a ui" style="left:726px;top:1673px;height:32px;line-height:32px;font-size:22.4px;color:#bbbbbb">Terminal</div>
<svg class="a" style="left:2816px;top:1675px" width="28" height="28" viewBox="0 0 28 28"><rect x="1.5" y="1.5" width="25" height="24" rx="2" fill="#3c3f41" stroke="#000" stroke-width="2.4"/><rect x="1.5" y="1.5" width="25" height="5" fill="#000"/><text x="3.5" y="21" font-family="Liberation Sans" font-size="11" font-weight="bold" fill="#000">/API</text></svg>
<div class="a ui" style="left:2853px;top:1673px;height:32px;line-height:32px;font-size:22.4px;color:#bbbbbb">Audit Problems</div>

<!-- status bar -->
<svg class="a" style="left:10px;top:1716px" width="30" height="28" viewBox="0 0 30 28"><path d="M8 2H26V19H8Z" fill="none" stroke="#afb1b3" stroke-width="2"/><path d="M3 7V25H20" fill="none" stroke="#afb1b3" stroke-width="2"/></svg>
<div class="a ui" style="left:62px;top:1714px;height:32px;line-height:32px;font-size:22.7px;color:#bbbbbb">Compilation failed (5 minutes ago)</div>
<div class="a ui" style="left:2527px;top:1714px;height:32px;line-height:32px;font-size:21px;color:#bbbbbb">17:31</div>
<div class="a ui" style="left:2604px;top:1714px;height:32px;line-height:32px;font-size:21px;color:#bbbbbb">LF</div>
<div class="a ui" style="left:2652px;top:1714px;height:32px;line-height:32px;font-size:22.6px;color:#bbbbbb">UTF-8</div>
<div class="a ui" style="left:2742px;top:1714px;height:32px;line-height:32px;font-size:21.5px;color:#bbbbbb">Tab</div>
<div class="a ui" style="left:2836px;top:1714px;height:32px;line-height:32px;font-size:22.5px;color:#bbbbbb">master</div>
<svg class="a" style="left:2800px;top:1714px" width="260" height="36" viewBox="2800 1714 260 36">
 <g fill="#afb1b3"><circle cx="2810" cy="1720" r="3.4"/><circle cx="2821" cy="1723" r="3.4"/><circle cx="2810" cy="1740" r="3.4"/></g>
 <path d="M2810 1720V1740M2821 1723C2821 1731 2816 1733 2810 1735" fill="none" stroke="#afb1b3" stroke-width="3.2"/>
 <path d="M2928 1727V1722A5 5 0 0 1 2938 1722V1724" fill="none" stroke="#afb1b3" stroke-width="2.6"/>
 <rect x="2932" y="1728" width="16" height="14" fill="#afb1b3"/>
 <path d="M2979 1738C2975 1738 2972 1735.5 2972 1732C2972 1729 2974 1727 2976.5 1726.5C2977 1722 2981 1718.5 2986 1718.5C2991 1718.5 2995 1722 2995.5 1726.5C2998 1727 3000 1729 3000 1732" fill="#afb1b3"/>
 <text x="2981" y="1734" font-family="Liberation Sans" font-size="13" font-weight="bold" fill="#3c3f41">?</text>
 <g transform="translate(2995,1738)"><circle r="5" fill="#afb1b3"/><g fill="#afb1b3"><rect x="-1.6" y="-7.5" width="3.2" height="15"/><rect x="-1.6" y="-7.5" width="3.2" height="15" transform="rotate(60)"/><rect x="-1.6" y="-7.5" width="3.2" height="15" transform="rotate(120)"/></g><circle r="2" fill="#3c3f41"/></g>
 <circle cx="3036" cy="1729.5" r="12" fill="#585858"/>
 <rect x="3034.2" y="1722" width="3.8" height="7.8" fill="#3c3f41"/><rect x="3034.2" y="1734" width="3.8" height="3.8" fill="#3c3f41"/>
</svg>
<!--/PANELS-->

<!--CONTENT-->
</div>
<div id="wborder"></div>
</body></html>
